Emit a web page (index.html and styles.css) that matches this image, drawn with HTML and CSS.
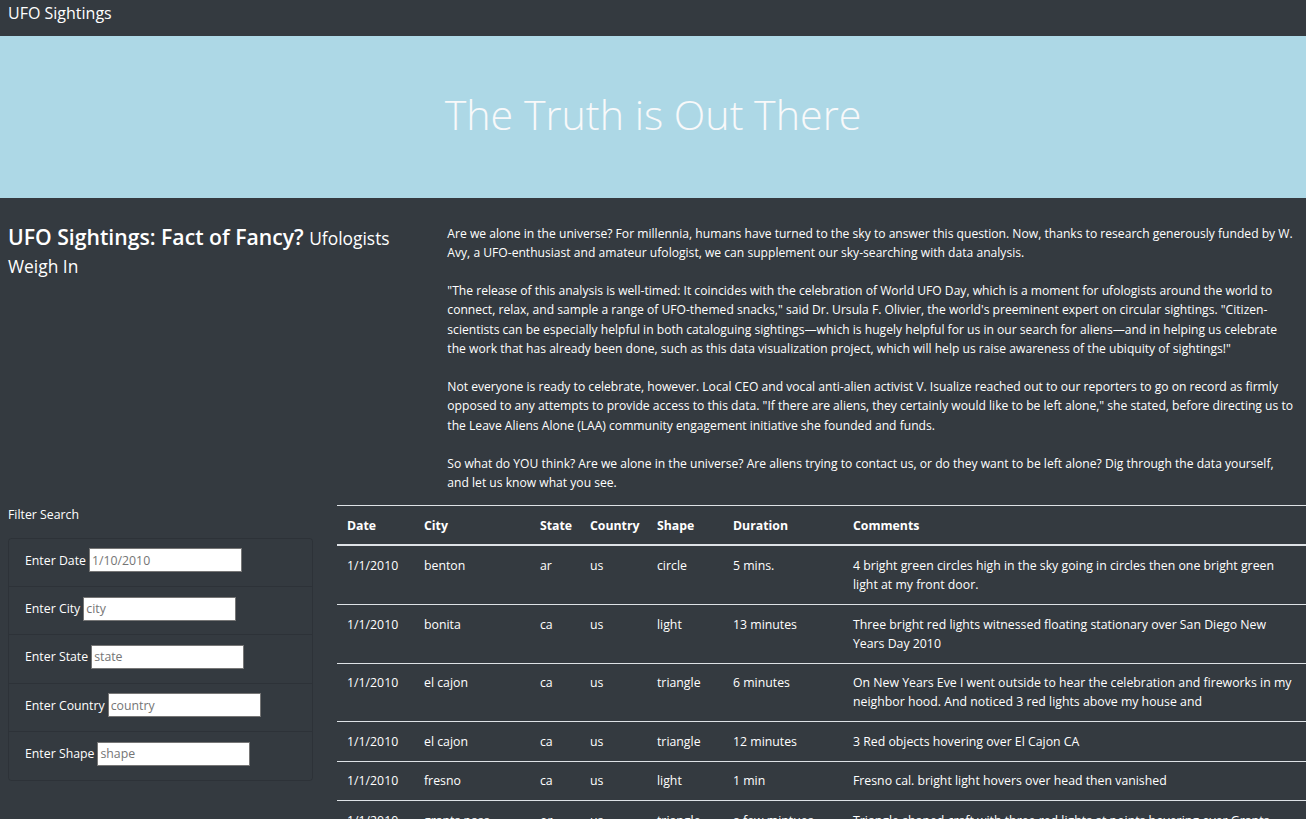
FILE: index.html
```html
<!DOCTYPE html>
<html lang="en">
<head>
<meta charset="utf-8">
<title>UFO Sightings</title>
<link rel="stylesheet" href="styles.css">
</head>
<body>
<nav class="navbar"><span class="brand">UFO Sightings</span></nav>
<header class="jumbo"><h1 class="display">The Truth is Out There</h1></header>
<section class="intro">
  <div class="intro-left">
    <h3 class="headline">UFO Sightings: Fact of Fancy? <small>Ufologists Weigh In</small></h3>
  </div>
  <div class="intro-right">
    <p>Are we alone in the universe? For millennia, humans have turned to the sky to answer this question. Now, thanks to research generously funded by W. Avy, a UFO-enthusiast and amateur ufologist, we can supplement our sky-searching with data analysis.</p>
    <p>"The release of this analysis is well-timed: It coincides with the celebration of World UFO Day, which is a moment for ufologists around the world to connect, relax, and sample a range of UFO-themed snacks," said Dr. Ursula F. Olivier, the world's preeminent expert on circular sightings. "Citizen-scientists can be especially helpful in both cataloguing sightings—which is hugely helpful for us in our search for aliens—and in helping us celebrate the work that has already been done, such as this data visualization project, which will help us raise awareness of the ubiquity of sightings!"</p>
    <p>Not everyone is ready to celebrate, however. Local CEO and vocal anti-alien activist V. Isualize reached out to our reporters to go on record as firmly opposed to any attempts to provide access to this data. "If there are aliens, they certainly would like to be left alone," she stated, before directing us to the Leave Aliens Alone (LAA) community engagement initiative she founded and funds.</p>
    <p class="last">So what do YOU think? Are we alone in the universe? Are aliens trying to contact us, or do they want to be left alone? Dig through the data yourself, and let us know what you see.</p>
  </div>
</section>
<section class="data">
  <aside class="filters">
    <div class="filter-title">Filter Search</div>
    <ul class="filter-list">
      <li class="filter-item"><label>Enter Date <input type="text" placeholder="1/10/2010"></label></li>
      <li class="filter-item"><label>Enter City <input type="text" placeholder="city"></label></li>
      <li class="filter-item"><label>Enter State <input type="text" placeholder="state"></label></li>
      <li class="filter-item"><label>Enter Country <input type="text" placeholder="country"></label></li>
      <li class="filter-item"><label>Enter Shape <input type="text" placeholder="shape"></label></li>
    </ul>
  </aside>
  <div class="table-wrap">
    <table class="sightings">
      <colgroup>
        <col class="c-date"><col class="c-city"><col class="c-state"><col class="c-country"><col class="c-shape"><col class="c-dur"><col class="c-com">
      </colgroup>
      <thead>
        <tr><th>Date</th><th>City</th><th>State</th><th>Country</th><th>Shape</th><th>Duration</th><th>Comments</th></tr>
      </thead>
      <tbody>
        <tr><td>1/1/2010</td><td>benton</td><td>ar</td><td>us</td><td>circle</td><td>5 mins.</td><td>4 bright green circles high in the sky going in circles then one bright green light at my front door.</td></tr>
        <tr><td>1/1/2010</td><td>bonita</td><td>ca</td><td>us</td><td>light</td><td>13 minutes</td><td>Three bright red lights witnessed floating stationary over San Diego New Years Day 2010</td></tr>
        <tr><td>1/1/2010</td><td>el cajon</td><td>ca</td><td>us</td><td>triangle</td><td>6 minutes</td><td>On New Years Eve I went outside to hear the celebration and fireworks in my neighbor hood. And noticed 3 red lights above my house and</td></tr>
        <tr><td>1/1/2010</td><td>el cajon</td><td>ca</td><td>us</td><td>triangle</td><td>12 minutes</td><td>3 Red objects hovering over El Cajon CA</td></tr>
        <tr><td>1/1/2010</td><td>fresno</td><td>ca</td><td>us</td><td>light</td><td>1 min</td><td>Fresno cal. bright light hovers over head then vanished</td></tr>
        <tr><td>1/1/2010</td><td>grants pass</td><td>or</td><td>us</td><td>triangle</td><td>a few mintues</td><td>Triangle shaped craft with three red lights at points hovering over Grants Pass</td></tr>
      </tbody>
    </table>
  </div>
</section>
</body>
</html>
```
FILE: styles.css
```css
html, body {
  margin: 0;
  padding: 0;
}
body {
  background: #343a40;
  color: #fff;
  font-family: "Open Sans", "Noto Sans", "DejaVu Sans", sans-serif;
  font-size: 12.3px;
  line-height: 19.2px;
  overflow: hidden;
}
.navbar {
  height: 36px;
  box-sizing: border-box;
  padding: 1px 8px 0;
}
.brand {
  font-size: 16px;
  line-height: 24px;
  color: #fff;
}
.jumbo {
  height: 162px;
  box-sizing: border-box;
  background: #add8e6;
  margin: 0 0 25.6px;
  padding-top: 54px;
  text-align: center;
}
.display {
  margin: 0;
  font-size: 41.2px;
  line-height: 1.2;
  font-weight: 300;
  color: #f8f9fa;
}
.intro {
  display: grid;
  grid-template-columns: 1fr 2fr;
}
.intro-left {
  padding: 0 12px 0 8px;
}
.intro-right {
  padding: 0 12px;
}
.headline {
  margin: 0;
  font-size: 21.2px;
  line-height: 26.9px;
  font-weight: 600;
}
.headline small {
  font-size: 17.4px;
  font-weight: 400;
}
.intro-right p {
  margin: 0 0 19.2px;
  font-size: 12.12px;
}
.intro-right p.last {
  margin-bottom: 12.6px;
}
.data {
  display: grid;
  grid-template-columns: 326.5px 1fr;
}
.filters {
  padding: 0 13.5px 0 8px;
}
.filter-title {
  line-height: 19.2px;
  margin-bottom: 13.4px;
}
.filter-list {
  list-style: none;
  margin: 0;
  padding: 0;
  border: 1px solid rgba(0, 0, 0, 0.125);
  border-radius: 3.2px;
}
.filter-item {
  height: 48.4px;
  box-sizing: border-box;
  padding: 9.6px 16px 0;
  border-top: 1px solid rgba(0, 0, 0, 0.125);
}
.filter-item:first-child {
  border-top: 0;
  height: 47.4px;
}
.filter-item label {
  display: flex;
  align-items: center;
  height: 24px;
  gap: 3px;
}
.filter-item input {
  width: 153px;
  height: 24px;
  box-sizing: border-box;
  margin: 0;
  padding: 1px 2px;
  border: 1px solid #767676;
  background: #fff;
  color: #495057;
  font-family: inherit;
  font-size: 12.3px;
}
.filter-item input::placeholder {
  color: #757575;
}
.table-wrap {
  padding-left: 10.9px;
}
.sightings {
  width: 100%;
  border-collapse: collapse;
  table-layout: fixed;
  color: #fff;
}
.c-date { width: 77px; }
.c-city { width: 116px; }
.c-state { width: 50px; }
.c-country { width: 67px; }
.c-shape { width: 76px; }
.c-dur { width: 120px; }
.sightings th,
.sightings td {
  padding: 9.6px;
  text-align: left;
  vertical-align: top;
  border-top: 1px solid #dee2e6;
}
.sightings th {
  font-weight: 700;
  vertical-align: bottom;
  border-bottom: 2px solid #dee2e6;
  white-space: nowrap;
}
```
